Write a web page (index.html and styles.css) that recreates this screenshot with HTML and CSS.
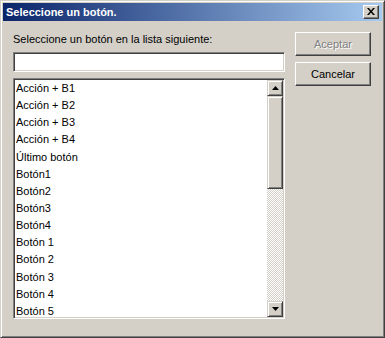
FILE: index.html
```html
<!DOCTYPE html>
<html>
<head>
<meta charset="utf-8">
<link rel="stylesheet" href="styles.css">
</head>
<body>
<div class="dialog">
  <div class="titlebar">
    <span class="title">Seleccione un botón.</span>
    <span class="close">
      <svg width="8" height="7" viewBox="0 0 8 7"><path d="M0 0h2l2 2.5L6 0h2L5 3.5 8 7H6L4 4.5 2 7H0l3-3.5z" fill="#000"/></svg>
    </span>
  </div>
  <div class="content">
    <div class="left">
      <div class="label">Seleccione un botón en la lista siguiente:</div>
      <div class="textbox"></div>
      <div class="listbox">
        <ul class="items">
          <li>Acción + B1</li>
          <li>Acción + B2</li>
          <li>Acción + B3</li>
          <li>Acción + B4</li>
          <li>Último botón</li>
          <li>Botón1</li>
          <li>Botón2</li>
          <li>Botón3</li>
          <li>Botón4</li>
          <li>Botón 1</li>
          <li>Botón 2</li>
          <li>Botón 3</li>
          <li>Botón 4</li>
          <li>Botón 5</li>
        </ul>
        <div class="scrollbar">
          <div class="sbtn"><svg width="7" height="4" viewBox="0 0 7 4"><path d="M3.5 0L7 4H0z" fill="#000"/></svg></div>
          <div class="thumb"></div>
          <div class="track"></div>
          <div class="sbtn"><svg width="7" height="4" viewBox="0 0 7 4"><path d="M0 0h7L3.5 4z" fill="#000"/></svg></div>
        </div>
      </div>
    </div>
    <div class="right">
      <div class="button disabled">Aceptar</div>
      <div class="button">Cancelar</div>
    </div>
  </div>
</div>
</body>
</html>
```
FILE: styles.css
```css
html, body {
  margin: 0;
  padding: 0;
  background: #d4d0c8;
}
body {
  font-family: "Liberation Sans", Arial, sans-serif;
  font-size: 11px;
  color: #000;
}
.dialog {
  width: 385px;
  height: 338px;
  box-sizing: border-box;
  background: #d4d0c8;
  border-top: 1px solid #d4d0c8;
  border-left: 1px solid #d4d0c8;
  border-right: 1px solid #404040;
  border-bottom: 1px solid #404040;
  box-shadow: inset 1px 1px 0 #fff, inset -1px -1px 0 #808080;
  padding: 2px;
  display: flex;
  flex-direction: column;
}
.titlebar {
  height: 18px;
  background: linear-gradient(to right, #0a246a, #a6caf0);
  display: flex;
  align-items: center;
  justify-content: space-between;
  padding: 0 3px 0 3px;
}
.title {
  color: #fff;
  font-weight: bold;
  font-size: 11px;
}
.close {
  width: 16px;
  height: 14px;
  box-sizing: border-box;
  background: #d4d0c8;
  border-top: 1px solid #fff;
  border-left: 1px solid #fff;
  border-right: 1px solid #404040;
  border-bottom: 1px solid #404040;
  box-shadow: inset -1px -1px 0 #808080;
  display: flex;
  align-items: center;
  justify-content: center;
  padding: 0 1px 1px 0;
}
.close svg { display: block; }
.content {
  display: flex;
  gap: 10px;
  padding: 11px 0 0 10px;
}
.left {
  width: 272px;
  display: flex;
  flex-direction: column;
}
.label {
  height: 13px;
  line-height: 13px;
  margin-top: 1px;
}
.textbox {
  margin-top: 6px;
  height: 20px;
  box-sizing: border-box;
  background: #fff;
  border-top: 1px solid #808080;
  border-left: 1px solid #808080;
  border-right: 1px solid #fff;
  border-bottom: 1px solid #fff;
  box-shadow: inset 1px 1px 0 #404040, inset -1px -1px 0 #d4d0c8;
}
.listbox {
  margin-top: 6px;
  height: 241px;
  box-sizing: border-box;
  background: #fff;
  border-top: 1px solid #808080;
  border-left: 1px solid #808080;
  border-right: 1px solid #fff;
  border-bottom: 1px solid #fff;
  box-shadow: inset 1px 1px 0 #404040, inset -1px -1px 0 #d4d0c8;
  padding: 1px;
  display: flex;
  overflow: hidden;
}
.items {
  list-style: none;
  margin: 0;
  padding: 0;
  flex: 1;
  overflow: hidden;
}
.items li {
  height: 17.15px;
  line-height: 17.15px;
  padding-left: 1px;
  white-space: nowrap;
}
.scrollbar {
  width: 16px;
  display: flex;
  flex-direction: column;
}
.sbtn, .thumb {
  box-sizing: border-box;
  background: #d4d0c8;
  border-top: 1px solid #d4d0c8;
  border-left: 1px solid #d4d0c8;
  border-right: 1px solid #404040;
  border-bottom: 1px solid #404040;
  box-shadow: inset 1px 1px 0 #fff, inset -1px -1px 0 #808080;
}
.sbtn {
  height: 16px;
  display: flex;
  align-items: center;
  justify-content: center;
}
.sbtn svg { display: block; }
.thumb {
  height: 93px;
}
.track {
  flex: 1;
  background: repeating-conic-gradient(#d4d0c8 0 25%, #fff 0 50%) 0 0 / 2px 2px;
}
.right {
  display: flex;
  flex-direction: column;
  gap: 6px;
}
.button {
  width: 76px;
  height: 24px;
  box-sizing: border-box;
  background: #d4d0c8;
  border-top: 1px solid #fff;
  border-left: 1px solid #fff;
  border-right: 1px solid #404040;
  border-bottom: 1px solid #404040;
  box-shadow: inset -1px -1px 0 #808080;
  display: flex;
  align-items: center;
  justify-content: center;
  padding-bottom: 1px;
}
.button.disabled {
  color: #808080;
  text-shadow: 1px 1px 0 #fff;
}
```
